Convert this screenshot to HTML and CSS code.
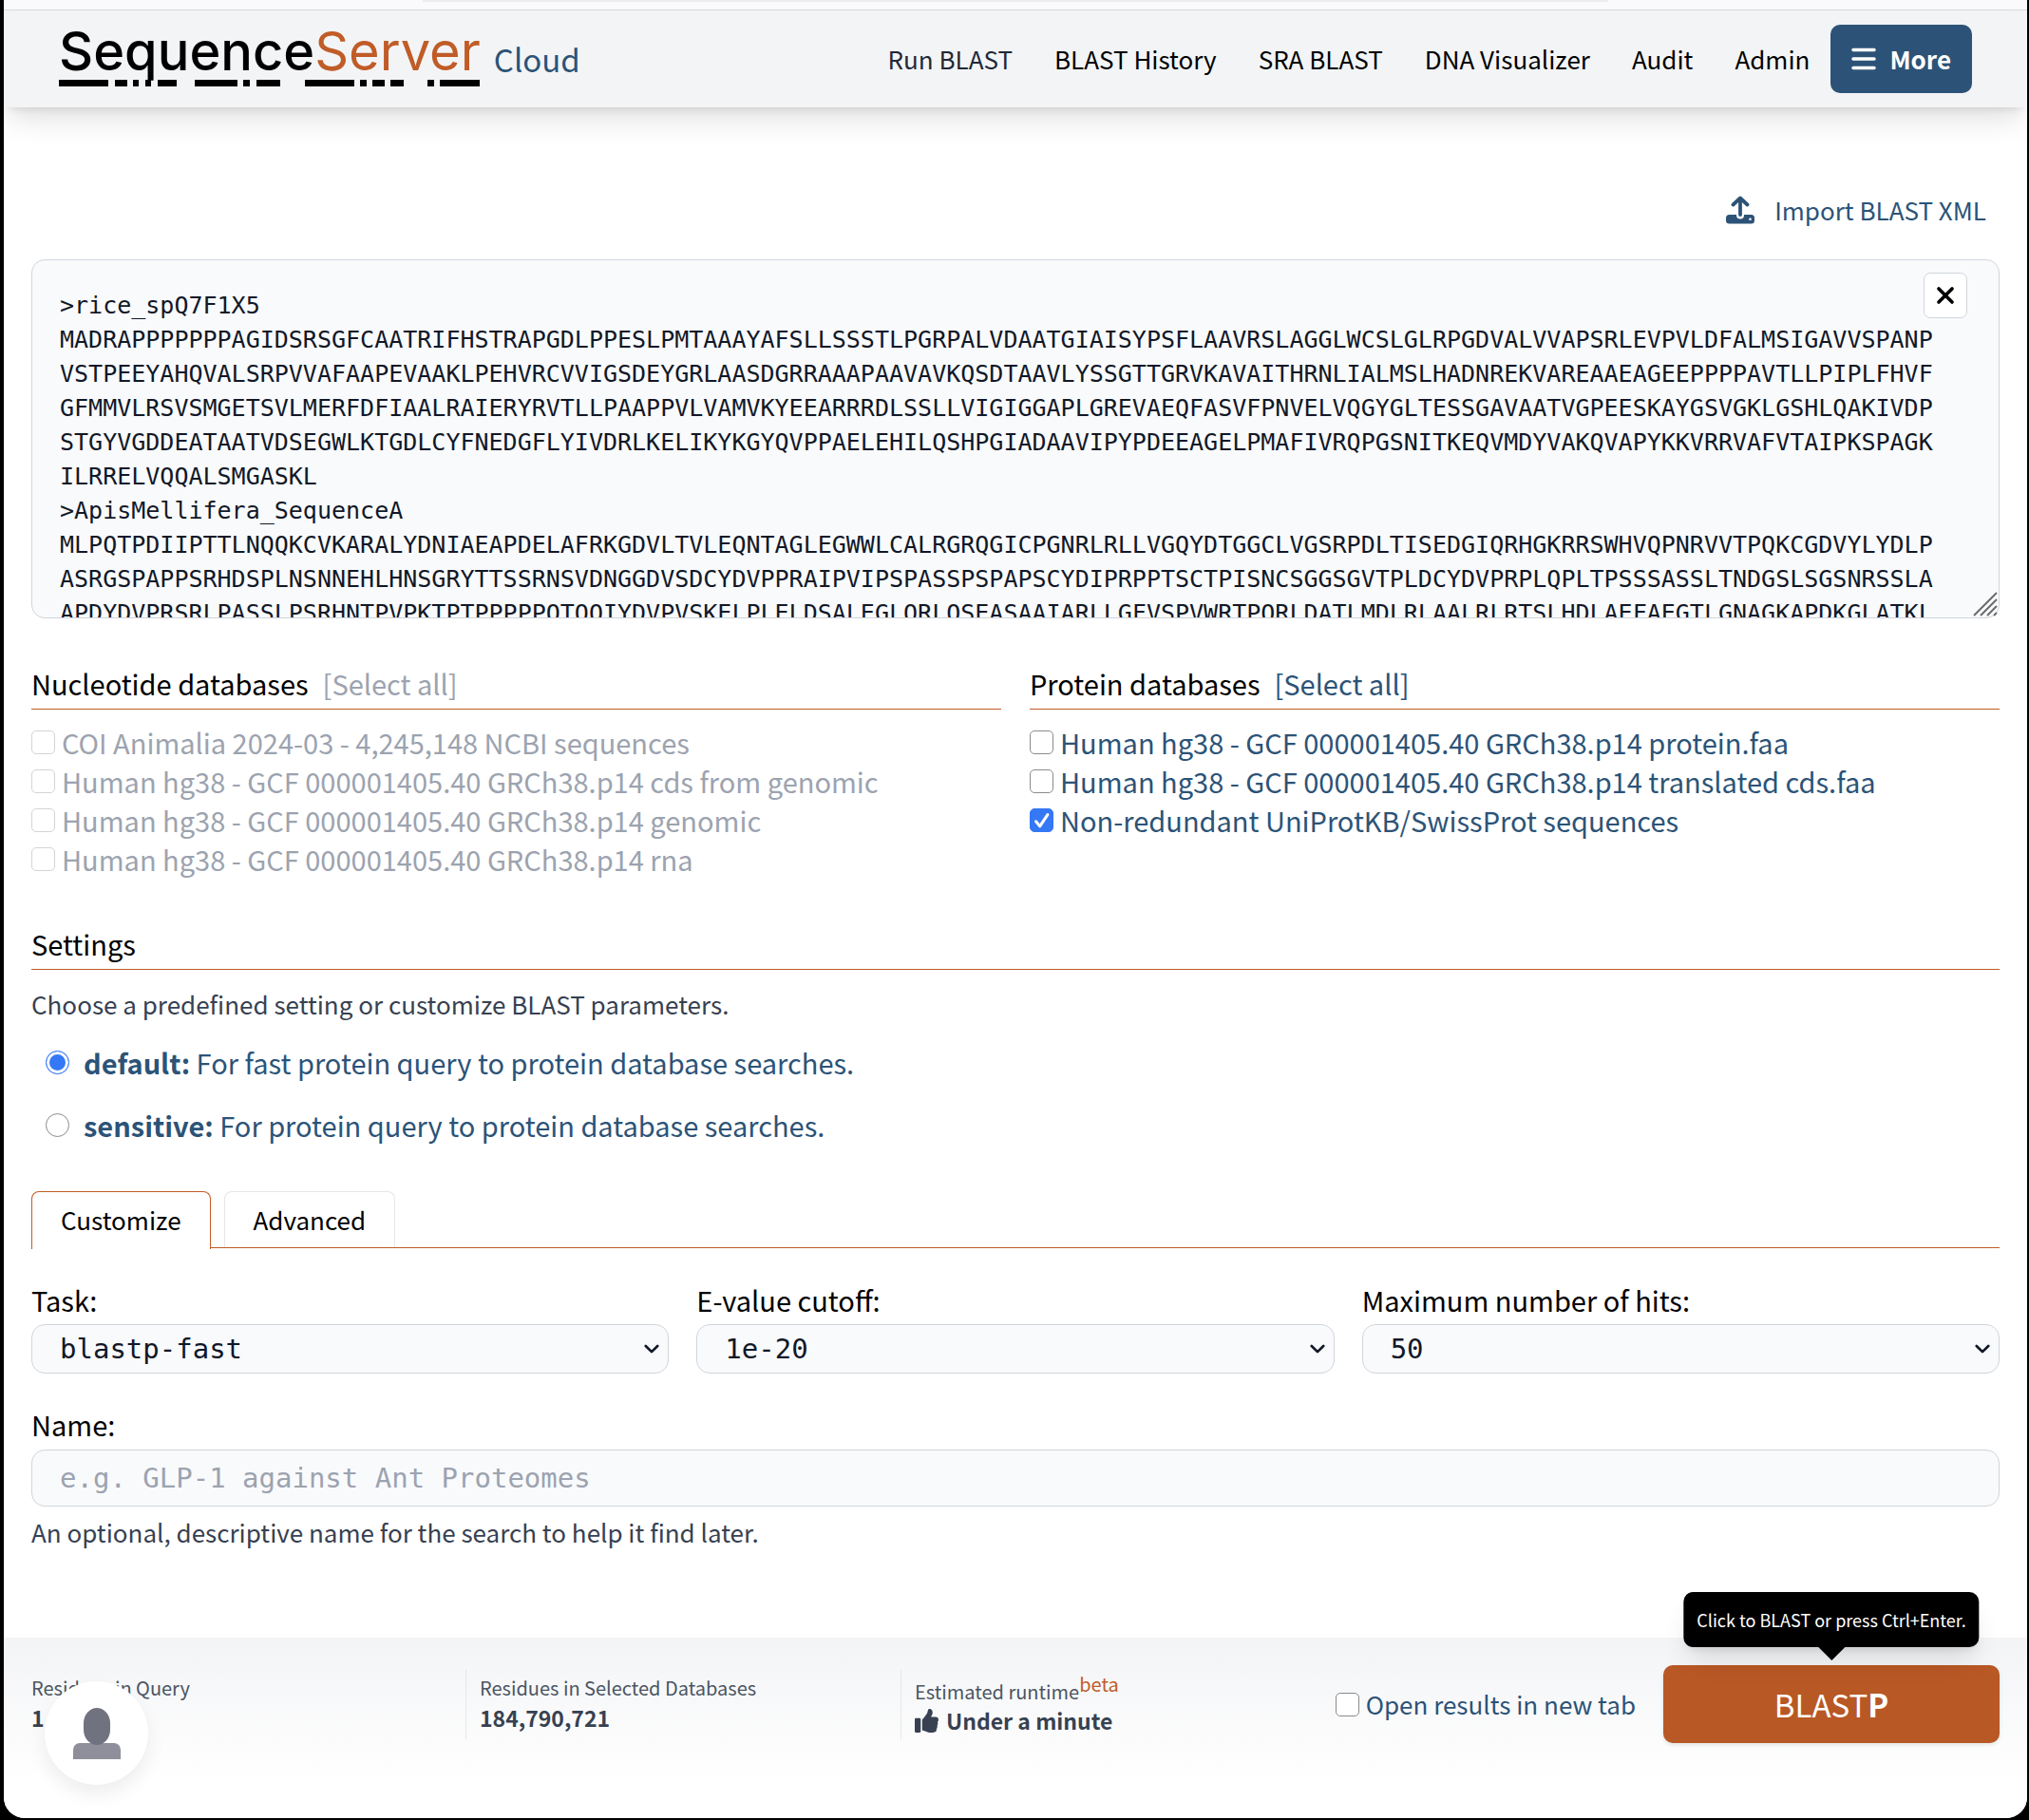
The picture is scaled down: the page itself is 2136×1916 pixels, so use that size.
FILE: index.html
```html
<!DOCTYPE html>
<html lang="en">
<head>
<meta charset="utf-8">
<title>SequenceServer Cloud</title>
<link rel="stylesheet" href="styles.css">
</head>
<body>
<div class="window">
  <div class="chrome"><div class="chrome-field"></div></div>
  <header class="header">
    <a class="brand" href="#">
      <span class="wordmark">
        <span class="wordmark-text">Sequence<span class="wordmark-accent">Server</span></span>
        <svg class="wordmark-bars" viewBox="0 0 443 7" aria-hidden="true"><path d="M0 0h52v7H0zM59 0h13v7H59zM78 0h6v7h-6zM91 0h6v7h-6zM104 0h20v7h-20zM143 0h45v7h-45zM194 0h7v7h-7zM208 0h25v7h-25zM259 0h52v7h-52zM317 0h7v7h-7zM330 0h13v7h-13zM349 0h14v7h-14zM388 0h7v7h-7zM401 0h42v7h-42z"/></svg>
      </span>
      <span class="brand-cloud">Cloud</span>
    </a>
    <nav class="nav">
      <a class="nav-link nav-link-current" href="#">Run BLAST</a>
      <a class="nav-link" href="#">BLAST History</a>
      <a class="nav-link" href="#">SRA BLAST</a>
      <a class="nav-link" href="#">DNA Visualizer</a>
      <a class="nav-link" href="#">Audit</a>
      <a class="nav-link" href="#">Admin</a>
    </nav>
    <button class="more" type="button">
      <svg class="more-icon" viewBox="0 0 26 24" aria-hidden="true"><path d="M2 2.500h22M2 12h22M2 21.500h22" stroke="currentColor" stroke-width="3.500" stroke-linecap="round"/></svg>
      More
    </button>
  </header>

  <main class="main">
    <div class="import-row">
      <a class="import" href="#">
        <svg class="import-icon" viewBox="0 0 30 30" fill="none" stroke-linecap="round" stroke-linejoin="round" aria-hidden="true"><rect x="0" y="20" width="30" height="9.500" rx="3.500" fill="currentColor"/><path d="M15 16v4.500" stroke="#fff" stroke-width="8"/><path d="M15 20V3M7.500 9.500L15 2.500l7.500 7" stroke="currentColor" stroke-width="3.800"/><circle cx="25.500" cy="24.800" r="1.300" fill="#fff"/></svg>
        Import BLAST XML
      </a>
    </div>

    <div class="query">
      <textarea class="query-input" aria-label="Query sequences" spellcheck="false" wrap="off">&gt;rice_spQ7F1X5
MADRAPPPPPPPAGIDSRSGFCAATRIFHSTRAPGDLPPESLPMTAAAYAFSLLSSSTLPGRPALVDAATGIAISYPSFLAAVRSLAGGLWCSLGLRPGDVALVVAPSRLEVPVLDFALMSIGAVVSPANP
VSTPEEYAHQVALSRPVVAFAAPEVAAKLPEHVRCVVIGSDEYGRLAASDGRRAAAPAAVAVKQSDTAAVLYSSGTTGRVKAVAITHRNLIALMSLHADNREKVAREAAEAGEEPPPPAVTLLPIPLFHVF
GFMMVLRSVSMGETSVLMERFDFIAALRAIERYRVTLLPAAPPVLVAMVKYEEARRRDLSSLLVIGIGGAPLGREVAEQFASVFPNVELVQGYGLTESSGAVAATVGPEESKAYGSVGKLGSHLQAKIVDP
STGYVGDDEATAATVDSEGWLKTGDLCYFNEDGFLYIVDRLKELIKYKGYQVPPAELEHILQSHPGIADAAVIPYPDEEAGELPMAFIVRQPGSNITKEQVMDYVAKQVAPYKKVRRVAFVTAIPKSPAGK
ILRRELVQQALSMGASKL
&gt;ApisMellifera_SequenceA
MLPQTPDIIPTTLNQQKCVKARALYDNIAEAPDELAFRKGDVLTVLEQNTAGLEGWWLCALRGRQGICPGNRLRLLVGQYDTGGCLVGSRPDLTISEDGIQRHGKRRSWHVQPNRVVTPQKCGDVYLYDLP
ASRGSPAPPSRHDSPLNSNNEHLHNSGRYTTSSRNSVDNGGDVSDCYDVPPRAIPVIPSPASSPSPAPSCYDIPRPPTSCTPISNCSGGSGVTPLDCYDVPRPLQPLTPSSSASSLTNDGSLSGSNRSSLA
APDYDVPRSRLPASSLPSRHNTPVPKTPTPPPPPQTQQIYDVPVSKELPLELDSALEGLQRLQSEASAAIARLLGFVSPVWRTPQRLDATLMDLRLAALRLRTSLHDLAEFAEGTLGNAGKAPDKGLATKL</textarea>
      <button class="query-clear" type="button" aria-label="Clear query">
        <svg class="query-clear-icon" viewBox="0 0 20 20" aria-hidden="true"><path d="M3 3l14 14M17 3L3 17" stroke="currentColor" stroke-width="3.700" stroke-linecap="round"/></svg>
      </button>
      <svg class="query-grip" viewBox="0 0 26 26" aria-hidden="true"><path d="M1 25L25 1M8 25L25 8M15 25l10-10M22 25l3-3" stroke="#6b6b6b" stroke-width="2"/></svg>
    </div>

    <div class="databases">
      <section>
        <h2 class="heading">Nucleotide databases <button class="select-all" type="button" disabled>[Select all]</button></h2>
        <ul class="db-list">
          <li><label class="option option-disabled"><input class="check" type="checkbox" disabled>COI Animalia 2024-03 - 4,245,148 NCBI sequences</label></li>
          <li><label class="option option-disabled"><input class="check" type="checkbox" disabled>Human hg38 - GCF 000001405.40 GRCh38.p14 cds from genomic</label></li>
          <li><label class="option option-disabled"><input class="check" type="checkbox" disabled>Human hg38 - GCF 000001405.40 GRCh38.p14 genomic</label></li>
          <li><label class="option option-disabled"><input class="check" type="checkbox" disabled>Human hg38 - GCF 000001405.40 GRCh38.p14 rna</label></li>
        </ul>
      </section>
      <section>
        <h2 class="heading">Protein databases <button class="select-all" type="button">[Select all]</button></h2>
        <ul class="db-list">
          <li><label class="option"><input class="check" type="checkbox">Human hg38 - GCF 000001405.40 GRCh38.p14 protein.faa</label></li>
          <li><label class="option"><input class="check" type="checkbox">Human hg38 - GCF 000001405.40 GRCh38.p14 translated cds.faa</label></li>
          <li><label class="option"><input class="check" type="checkbox" checked>Non-redundant UniProtKB/SwissProt sequences</label></li>
        </ul>
      </section>
    </div>

    <section class="settings">
      <h2 class="heading">Settings</h2>
      <p class="intro">Choose a predefined setting or customize BLAST parameters.</p>
      <div class="presets">
        <label class="preset"><input class="radio" type="radio" name="preset" checked><span><strong>default:</strong> For fast protein query to protein database searches.</span></label>
        <label class="preset"><input class="radio" type="radio" name="preset"><span><strong>sensitive:</strong> For protein query to protein database searches.</span></label>
      </div>
    </section>

    <div class="tabs">
      <button class="tab tab-active" type="button">Customize</button>
      <button class="tab" type="button">Advanced</button>
    </div>

    <div class="fields">
      <div class="field">
        <label for="task">Task:</label>
        <select class="select" id="task"><option>blastp-fast</option></select>
      </div>
      <div class="field">
        <label for="evalue">E-value cutoff:</label>
        <select class="select" id="evalue"><option>1e-20</option></select>
      </div>
      <div class="field">
        <label for="hits">Maximum number of hits:</label>
        <select class="select" id="hits"><option>50</option></select>
      </div>
    </div>

    <div class="field name-field">
      <label for="name">Name:</label>
      <input class="text-input" id="name" type="text" placeholder="e.g. GLP-1 against Ant Proteomes">
      <p class="hint">An optional, descriptive name for the search to help it find later.</p>
    </div>
  </main>

  <footer class="footer">
    <div class="stats">
      <div class="stat">
        <span class="stat-label">Residues in Query</span>
        <strong class="stat-value">1,</strong>
      </div>
      <div class="stat">
        <span class="stat-label">Residues in Selected Databases</span>
        <strong class="stat-value">184,790,721</strong>
      </div>
      <div class="stat">
        <span class="stat-label">Estimated runtime<sup class="beta">beta</sup></span>
        <strong class="stat-value"><svg class="thumb" viewBox="0 0 512 512" aria-hidden="true"><path fill="currentColor" d="M104 200H24c-13.255 0-24 10.745-24 24v264c0 13.255 10.745 24 24 24h80c13.255 0 24-10.745 24-24V224c0-13.255-10.745-24-24-24zM384 81.452c0 42.416-25.970 66.208-33.277 94.548h101.723c33.397 0 59.397 27.746 59.553 58.098.084 17.938-7.546 37.249-19.439 49.197l-.11.11c9.836 23.337 8.237 56.037-9.308 79.469 8.681 25.895-.069 57.704-16.382 74.757 4.298 17.598 2.244 32.575-6.148 44.632C440.202 511.587 389.616 512 346.839 512l-2.845-.001c-48.287-.017-87.806-17.598-119.560-31.725-15.957-7.099-36.821-15.887-52.651-16.178-6.540-.120-11.783-5.457-11.783-11.998v-213.770c0-3.200 1.282-6.271 3.558-8.521 39.614-39.144 56.648-80.587 89.117-113.111 14.804-14.832 20.188-37.236 25.393-58.902C282.515 39.293 291.817 0 312 0c24 0 72 8 72 81.452z"/></svg>Under a minute</strong>
      </div>
    </div>
    <label class="new-tab"><input class="check" type="checkbox">Open results in new tab</label>
    <div class="submit-wrap">
      <div class="tooltip" role="tooltip">Click to BLAST or press Ctrl+Enter.</div>
      <button class="submit" type="submit">BLAST<b>P</b></button>
    </div>
    <button class="avatar" type="button" aria-label="Account">
      <svg class="avatar-icon" viewBox="0 0 50 54" aria-hidden="true"><path fill="#8e8f9b" d="M0 54V44a7 7 0 0 1 7-7h36a7 7 0 0 1 7 7v10z"/><rect x="11" y="0" width="28" height="39" rx="14" ry="16" fill="#707280"/></svg>
    </button>
  </footer>
</div>
</body>
</html>
```
FILE: styles.css
```css
* { box-sizing: border-box; }

body {
  margin: 0;
  background: #000;
  color: #000;
  font-family: "Noto Sans CJK SC", "Open Sans", sans-serif;
  font-size: 26px;
  line-height: 36px;
}

button, input, select, textarea { font: inherit; color: inherit; margin: 0; }
button { cursor: pointer; }
a { color: inherit; text-decoration: none; }
h2, p, ul { margin: 0; padding: 0; }
ul { list-style: none; }

.window {
  display: flex;
  flex-direction: column;
  min-height: calc(100vh - 2px);
  margin: 0 2px 2px 4px;
  background: #fff;
  border-radius: 0 0 22px 22px;
  overflow: hidden;
}

.chrome {
  height: 11px;
  padding: 0 441px;
  background: #fafafc;
  border-bottom: 1px solid #dadadc;
}
.chrome-field { height: 2px; background: #ececee; }

.header {
  display: flex;
  align-items: center;
  padding: 15px 58px;
  background: #f3f4f6;
  box-shadow: 0 18px 28px -6px rgba(0, 0, 0, 0.12), 0 6px 10px -6px rgba(0, 0, 0, 0.14);
}

.brand { display: flex; align-items: center; gap: 14px; }
.wordmark { display: flex; flex-direction: column; gap: 9px; }
.wordmark-text {
  font-family: Inter, sans-serif;
  font-size: 56px;
  font-weight: 500;
  line-height: 42px;
}
.wordmark-accent { color: #c05c27; font-weight: 400; }
.wordmark-bars { width: 443px; height: 7px; }
.brand-cloud { color: #2c5377; font-size: 33px; }

.nav { display: flex; gap: 44px; margin-left: auto; margin-right: 22px; }
.nav-link-current { color: #1f2937; }

.more {
  display: flex;
  align-items: center;
  gap: 14px;
  padding: 18px 22px;
  border: 0;
  border-radius: 10px;
  background: #2c5377;
  color: #fff;
  font-weight: 700;
}
.more-icon { width: 26px; height: 24px; }

.main { padding: 90px 29px 0; }

.import-row { display: flex; justify-content: flex-end; padding-right: 14px; }
.import { display: flex; align-items: center; gap: 21px; color: #2c5377; }
.import-icon { width: 30px; height: 30px; }

.query { position: relative; display: flex; margin-top: 34px; }
.query-input {
  width: 100%;
  height: 378px;
  padding: 30px 29px;
  border: 1px solid #d1d5db;
  border-radius: 14px;
  background: #f9fafc;
  color: #111827;
  font-family: "DejaVu Sans Mono", monospace;
  font-size: 25px;
  line-height: 36px;
  overflow: hidden;
  resize: none;
}
.query-clear {
  position: absolute;
  top: 14px;
  right: 34px;
  display: flex;
  padding: 13px 12px;
  border: 1px solid #d1d5db;
  border-radius: 7px;
  background: #fff;
  color: #000;
}
.query-clear-icon { width: 20px; height: 20px; }
.query-grip { position: absolute; right: 2px; bottom: 2px; width: 26px; height: 26px; }

.databases {
  display: grid;
  grid-template-columns: 1fr 1fr;
  gap: 30px;
  margin-top: 50px;
}
.heading {
  display: flex;
  gap: 15px;
  padding-bottom: 9px;
  border-bottom: 1px solid #c05c27;
  font-size: 29px;
  font-weight: 400;
}
.select-all { padding: 0; border: 0; background: none; color: #2c5377; }
.select-all:disabled { color: #9ca3af; }
.db-list { margin-top: 14px; }

.option {
  display: flex;
  align-items: center;
  gap: 7px;
  color: #2c5377;
  font-size: 29px;
  line-height: 41px;
}
.option-disabled { color: #9ca3af; }

.check {
  appearance: none;
  flex: none;
  width: 25px;
  height: 25px;
  border: 1px solid #8b8b90;
  border-radius: 5px;
  background: #fff;
}
.check:disabled { border-color: #d3d4d8; }
.check:checked {
  border-color: #3478f6;
  background: #3478f6 url("data:image/svg+xml,%3Csvg xmlns='http://www.w3.org/2000/svg' viewBox='0 0 24 24'%3E%3Cpath d='M6 13l4 5L18 6' fill='none' stroke='white' stroke-width='3' stroke-linecap='round' stroke-linejoin='round'/%3E%3C/svg%3E") center / 24px 24px no-repeat;
}

.settings { margin-top: 50px; }
.intro { margin-top: 18px; color: #374151; }
.presets { display: flex; flex-direction: column; gap: 30px; margin-top: 25px; padding-left: 15px; }
.preset { display: flex; align-items: center; gap: 15px; color: #2c5377; font-size: 29px; }
.radio {
  appearance: none;
  flex: none;
  width: 25px;
  height: 25px;
  border: 1px solid #8b8b90;
  border-radius: 50%;
  background: #fff;
}
.radio:checked { border-color: #3478f6; background: #3478f6; box-shadow: inset 0 0 0 3px #fff; }

.tabs {
  display: flex;
  gap: 14px;
  margin-top: 52px;
  border-bottom: 1px solid #c05c27;
}
.tab {
  padding: 11px 30px;
  border: 1px solid #e5e7eb;
  border-bottom: 0;
  border-radius: 8px 8px 0 0;
  background: #fff;
}
.tab-active { border-color: #c05c27; margin-bottom: -2px; padding-bottom: 13px; }

.fields {
  display: grid;
  grid-template-columns: repeat(3, 1fr);
  gap: 29px;
  margin-top: 36px;
}
.field { display: flex; flex-direction: column; gap: 8px; font-size: 29px; }
.name-field { gap: 9px; margin-top: 35px; }
.select, .text-input {
  width: 100%;
  padding: 7px 29px;
  border: 1px solid #d1d5db;
  border-radius: 14px;
  background: #f9fafc;
  color: #111827;
  font-family: "DejaVu Sans Mono", monospace;
  font-size: 29px;
  line-height: 36px;
}
.select {
  appearance: none;
  background: #f9fafc url("data:image/svg+xml,%3Csvg xmlns='http://www.w3.org/2000/svg' viewBox='0 0 18 12'%3E%3Cpath d='M2 2l7 7 7-7' fill='none' stroke='%23111827' stroke-width='3' stroke-linecap='round' stroke-linejoin='round'/%3E%3C/svg%3E") right 9px center / 16px 11px no-repeat;
}
.text-input { padding: 11px 29px; }
.text-input::placeholder { color: #9ca3af; opacity: 1; }
.hint { color: #374151; font-size: 26px; }

.footer {
  position: relative;
  display: flex;
  align-items: center;
  margin-top: auto;
  padding: 29px 29px 79px;
  background: linear-gradient(#f3f4f6, #fff 80%);
}
.stats { display: flex; flex: 1; }
.stat {
  display: flex;
  flex-direction: column;
  justify-content: center;
  width: 458px;
  min-height: 73px;
  padding-left: 14px;
  border-left: 1px solid #e5e7eb;
}
.stat:first-child { width: 457px; padding-left: 0; border-left: 0; }
.stat:last-child { width: auto; }
.stat-label { color: #4b5563; font-size: 20px; line-height: 28px; }
.stat-value { display: flex; align-items: center; gap: 8px; color: #374151; font-size: 23px; line-height: 34px; }
.beta { color: #c05c27; line-height: 26px; font-size: 20px; }
.thumb { width: 25px; height: 25px; }

.new-tab { display: flex; align-items: center; gap: 7px; margin-right: 29px; color: #2c5377; }
.submit-wrap { position: relative; }
.submit {
  width: 354px;
  padding: 20px;
  border: 0;
  border-radius: 10px;
  background: #b85825;
  color: #fff;
  font-size: 33px;
  line-height: 42px;
  box-shadow: 0 2px 4px rgba(0, 0, 0, 0.1);
}
.tooltip {
  position: absolute;
  left: 50%;
  bottom: 101px;
  z-index: 1;
  transform: translateX(-50%);
  padding: 15px 14px;
  border-radius: 10px;
  background: #000;
  color: #fff;
  font-size: 18px;
  line-height: 28px;
  white-space: nowrap;
  box-shadow: 0 18px 28px -6px rgba(0, 0, 0, 0.12), 0 6px 10px -6px rgba(0, 0, 0, 0.14);
}
.tooltip::after {
  content: "";
  position: absolute;
  top: 100%;
  left: 50%;
  margin-left: -14px;
  border: 14px solid transparent;
  border-top-color: #000;
  border-bottom: 0;
}

.avatar {
  position: absolute;
  left: 43px;
  bottom: 35px;
  display: flex;
  align-items: center;
  justify-content: center;
  width: 109px;
  height: 109px;
  padding: 0;
  border: 0;
  border-radius: 50%;
  background: #fff;
  box-shadow: 0 10px 20px rgba(0, 0, 0, 0.07);
}
.avatar-icon { width: 50px; height: 54px; }
```
